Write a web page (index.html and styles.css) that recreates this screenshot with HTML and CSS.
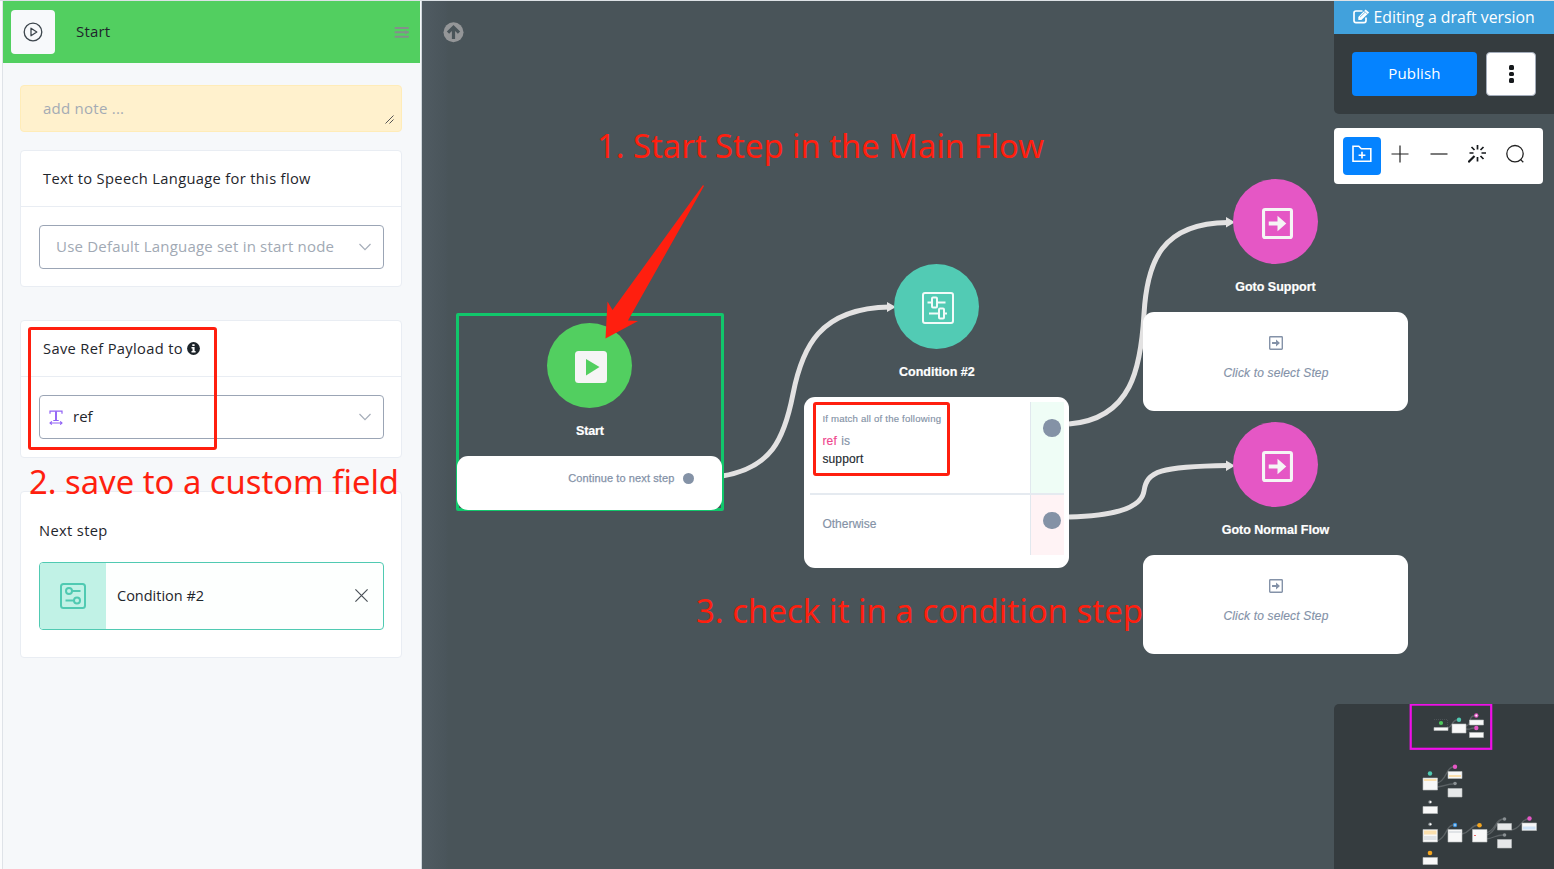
FILE: index.html
```html
<!DOCTYPE html>
<html lang="en">
<head>
<meta charset="utf-8">
<title>Flow builder</title>
<link rel="stylesheet" href="styles.css">
</head>
<body>
<svg class="defs" width="0" height="0">
  <symbol id="goto" viewBox="0 0 30 30">
    <rect x="1.5" y="1.5" width="27" height="27" rx="1.5" fill="none" stroke="currentColor" stroke-width="3"/>
    <path d="M6.5 13H15V7.5L23.5 15L15 22.5V17H6.5Z" fill="currentColor"/>
  </symbol>
</svg>
<div class="app">
  <aside class="sidebar">
    <header class="head">
      <span class="head-icon">
        <svg width="20" height="20" viewBox="0 0 20 20" fill="none" stroke="#3d464d" stroke-width="1.3"><circle cx="10" cy="10" r="8.8"/><path d="M8 6.2V13.8L13.8 10Z" stroke-linejoin="round"/></svg>
      </span>
      <span class="head-title">Start</span>
      <svg class="head-menu" width="16" height="13" viewBox="0 0 16 13" stroke="#848f8c" stroke-width="2" stroke-linecap="round"><path d="M1.5 2H14M1.5 6.3H14M1.5 10.8H14"/><path d="M11 4L14.5 6.3L11 8.6Z" fill="#848f8c" stroke="none"/></svg>
    </header>
    <div class="body">
      <div class="note">add note ...
        <svg class="grip" width="9" height="9" viewBox="0 0 9 9" stroke="#555" stroke-width="1"><path d="M.5 8.5L8.5 .5M4.5 8.5L8.5 4.5"/></svg>
      </div>
      <section class="card">
        <h2 class="card-head">Text to Speech Language for this flow</h2>
        <div class="card-body">
          <div class="select placeholder"><span>Use Default Language set in start node</span>
            <svg width="12" height="8" viewBox="0 0 12 8" fill="none" stroke="#a5adb9" stroke-width="1.2"><path d="M.5 1L6 6.6L11.5 1"/></svg></div>
        </div>
      </section>
      <section class="card spaced">
        <h2 class="card-head">Save Ref Payload to
          <svg class="info" width="13" height="13" viewBox="0 0 13 13"><circle cx="6.5" cy="6.5" r="6.4" fill="#1c2329"/><path d="M5.3 2.2h2.3v1.8H5.3zM4.5 5.1h3.1v4h1v1.4H4.5V9.1h1V6.5h-1z" fill="#fff"/></svg></h2>
        <div class="card-body">
          <div class="select value">
            <svg width="14" height="15" viewBox="0 0 14 15" fill="none" stroke="#9162f5"><path d="M1 3.8V1.2H13V3.8M4.3 10.5H9.7" stroke-width="1.2"/><path d="M7 1.2V10.5" stroke-width="1.9"/><path d="M1 13H13M2.8 11.4L1 13L2.8 14.6M11.2 11.4L13 13L11.2 14.6" stroke-width="1.1"/></svg>
            <span>ref</span>
            <svg class="chev" width="12" height="8" viewBox="0 0 12 8" fill="none" stroke="#a5adb9" stroke-width="1.2"><path d="M.5 1L6 6.6L11.5 1"/></svg></div>
        </div>
      </section>
      <section class="card spaced next">
        <h2 class="next-title">Next step</h2>
        <div class="step">
          <span class="step-icon"><svg width="26" height="26" viewBox="0 0 26 26" fill="none" stroke="#50cab2" stroke-width="2"><rect x="1" y="1" width="24" height="24" rx="2.5"/><circle cx="9" cy="8" r="3"/><path d="M12 8H20.5M5.5 17.5H14"/><circle cx="17" cy="17.5" r="3"/></svg></span>
          <span class="step-name">Condition #2</span>
          <svg width="13" height="13" viewBox="0 0 13 13" stroke="#4b5158" stroke-width="1.2"><path d="M.4 .4L12.6 12.6M12.6 .4L.4 12.6"/></svg>
        </div>
      </section>
    </div>
  </aside>

  <main class="canvas">
    <svg class="edges" width="1132" height="869" viewBox="422 0 1132 869">
      <g fill="none" stroke="#e3e2e2" stroke-width="5">
        <path d="M722 476C771 468 784 440 793 394S819 308 890 307"/>
        <path d="M1069 424C1132 419 1141 367 1144 314S1162 223 1228 222.5"/>
        <path d="M1069 517C1105 516 1141 511 1144 491S1160 466.5 1228 465.5"/>
      </g>
      <path d="M887 302L896 307L887 312ZM1226 217L1235 222.3L1226 227.5ZM1226 460.5L1235 465.7L1226 471Z" fill="#e3e2e2"/>
      <circle cx="453.5" cy="32.3" r="10" fill="#949698"/>
      <path d="M453.5 39V27.5M448 32.7L453.5 27.2L459 32.7" fill="none" stroke="#495459" stroke-width="3.2"/>
    </svg>

    <div class="selection"></div>
    <article class="node n-start">
      <div class="disc green"><svg width="32" height="32" viewBox="0 0 32 32"><rect width="32" height="32" rx="3.5" fill="#f5f5f5"/><path d="M11 8L24.5 16L11 24.5Z" fill="#52cf60"/></svg></div>
      <h3 class="node-title t-start">Start</h3>
      <div class="box box-start"><span>Continue to next step</span><i class="dot"></i></div>
    </article>

    <article class="node n-cond">
      <div class="disc teal"><svg width="32" height="32" viewBox="0 0 32 32" fill="none" stroke="#f2fbf9" stroke-width="2"><rect x="1" y="1" width="30" height="30" rx="2"/><path d="M5.5 10.5H9.5M15.5 10.5H23.5M7 21.5H16.5M22 21.5H25"/><rect x="10" y="5.5" width="5" height="10" rx="1"/><rect x="17" y="16.5" width="5" height="10" rx="1"/></svg></div>
      <h3 class="node-title">Condition #2</h3>
      <div class="box box-cond">
        <div class="rule match"><div class="rule-text"><p class="rule-cap">If match all of the following</p><p><b>ref</b> <em>is</em></p><p class="rule-val">support</p></div><div class="port ok"><i></i></div></div>
        <div class="rule other"><div class="rule-text">Otherwise</div><div class="port no"><i></i></div></div>
      </div>
    </article>

    <article class="node n-support">
      <div class="disc pink"><svg width="31" height="31"><use href="#goto"/></svg></div>
      <h3 class="node-title">Goto Support</h3>
      <div class="box box-goto"><svg width="14" height="14"><use href="#goto"/></svg><span>Click to select Step</span></div>
    </article>

    <article class="node n-normal">
      <div class="disc pink"><svg width="31" height="31"><use href="#goto"/></svg></div>
      <h3 class="node-title">Goto Normal Flow</h3>
      <div class="box box-goto"><svg width="14" height="14"><use href="#goto"/></svg><span>Click to select Step</span></div>
    </article>

    <div class="publish-panel">
      <div class="draft">
        <svg width="17" height="15" viewBox="0 0 17 15"><path d="M13 8.5V11.5Q13 13.6 11 13.6H3Q1 13.6 1 11.5V4Q1 2 3 2H9.5" fill="none" stroke="#fff" stroke-width="1.7"/><path d="M5.3 11V7.9L12.6 .4L16.2 3.6L8.4 11Z" fill="#fff"/><path d="M7 8.2L12 3.3M11 1.8L14.6 5.2" stroke="#41a1dc" stroke-width=".7"/></svg>
        <span>Editing a draft version</span>
      </div>
      <div class="publish-row"><button class="publish">Publish</button><button class="more"><i></i><i></i><i></i></button></div>
    </div>

    <div class="tools">
      <span class="tool active"><svg width="20" height="18" viewBox="0 0 20 18" fill="none" stroke="#fff" stroke-width="1.6"><path d="M1 16.2V1.2H6.8L9.3 3.8H18.8V16.2Z"/><path d="M10 6.8V13.6M6.6 10.2H13.4"/></svg></span>
      <span class="tool"><svg width="18" height="18" viewBox="0 0 18 18" stroke="#222" stroke-width="1.2"><path d="M9 .5V17.5M.5 9H17.5"/></svg></span>
      <span class="tool"><svg width="18" height="18" viewBox="0 0 18 18" stroke="#222" stroke-width="1.2"><path d="M.5 9H17.5"/></svg></span>
      <span class="tool"><svg width="18" height="18" viewBox="0 0 18 18" stroke="#16191c" stroke-width="1.7"><path d="M9.5 0V4.500M9.500 12V16.500M13.500 8H18M1.500 8H5.500M3.500 2L6.500 5M15.500 2L12.500 5M15.500 14L12.500 11"/><path d="M.3 17.200L6.500 11" stroke-width="2.200"/></svg></span>
      <span class="tool"><svg width="20" height="20" viewBox="0 0 20 20" fill="none" stroke="#222" stroke-width="1.3"><circle cx="10" cy="9.7" r="8.2"/><path d="M15.4 15.4L18.3 18.3"/></svg></span>
    </div>

    <svg class="minimap" width="220" height="165" viewBox="0 0 220 165">
      <g fill="none" stroke="#5b6164" stroke-width="1.3">
        <path d="M114 24C119 22 118 16 123 16M132 22C138 21 134 12 140 12M132 25C138 26 135 24 140 24M103 79C113 77 112 63 119 63M103 83C112 82 113 80 119 80M103 137C113 134 112 121 119 121M128 130C137 128 137 121 144 121M152 129C162 127 161 115 169 115M153 131C163 128 162 115 169 115M152 135C161 134 161 131 169 131M177 126C187 125 187 115 194 115"/>
        <path d="M100 15.5H113.5V24" stroke-dasharray="1 1" stroke-width=".6"/>
      </g>
      <rect x="76.7" y=".6" width="80.5" height="44.2" fill="none" stroke="#f00fe9" stroke-width="2.2"/>
      <g fill="#f8f8f8" stroke="#b9bcbd" stroke-width=".6">
        <path d="M100 23.5h14v3h-14zM118 20h14v9h-14zM135.5 16h14v5h-14zM135.5 28.5h14v5h-14z"/>
        <path d="M89 74h14.5v12H89zM114 67.5h14v7h-14zM89 102.5h14.5v7H89zM89 125.5h14.5v12.5H89zM114 125.5h14v12.5h-14zM138.5 125.5h14.5v12.5h-14.5zM188 119h14.5v7.5H188zM89 153.5h14.5v7H89z"/>
        <path d="M114 84.5h14v8.5h-14zM163.5 119.5h14v6.5h-14zM163.5 135.5h14v8.5h-14z" fill="#e6e8e9"/>
      </g>
      <path d="M90 75h12.5v2H90zM90 126.500h12.500v4H90zM115 71h12v2h-12z" fill="#fbe0ae"/>
      <path d="M90 132h12.500v4H90zM115 127h12v2h-12z" fill="#e0e3e6"/><path d="M189 122.500h12.500v3H189z" fill="#cfe3f7"/>
      <path d="M140 131h2v1h-2z" fill="#e66"/>
      <circle cx="107" cy="19" r="2.1" fill="#4dcb5c"/>
      <g fill="#50cab2"><circle cx="125" cy="15.7" r="2.2"/><circle cx="96" cy="69.5" r="2.2"/></g>
      <g fill="#e557c5"><circle cx="142.3" cy="11.5" r="2.2"/><circle cx="142.3" cy="24" r="2.2"/><circle cx="121" cy="62.8" r="2.2"/><circle cx="195.5" cy="114.5" r="2.2"/></g>
      <g fill="#f4a51f"><circle cx="145.5" cy="121.2" r="2.3"/><circle cx="96" cy="149" r="2.3"/></g>
      <circle cx="121" cy="121" r="2.2" fill="#3f93dc"/>
      <g fill="#8a9093"><circle cx="121" cy="79.5" r="1.8"/><circle cx="96" cy="98" r="1.7"/><circle cx="96" cy="120.3" r="1.7"/><circle cx="170.5" cy="115" r="1.8"/><circle cx="170.5" cy="131" r="1.8"/></g>
      <g fill="#fff"><circle cx="142.3" cy="11.5" r="1"/><circle cx="96.5" cy="98" r="1"/><circle cx="96.5" cy="120.3" r="1"/><circle cx="121" cy="121" r=".8"/></g>
    </svg>
  </main>
</div>

<svg class="notes" width="1554" height="869" viewBox="0 0 1554 869">
  <g fill="none" stroke="#ff1f0f" stroke-width="3">
    <rect x="29.5" y="328.5" width="186" height="120" rx="1.5"/>
    <rect x="814.5" y="403.5" width="134" height="71" rx="1.5"/>
  </g>
  <path d="M703 185L704 186L628 320.5L638 321L605.5 338.5L607.5 301.5L612.5 310Z" fill="#ff1f0f"/>
  <g class="callouts">
    <text x="597" y="158" textLength="447" lengthAdjust="spacingAndGlyphs">1. Start Step in the Main Flow</text>
    <text x="29" y="494" textLength="370" lengthAdjust="spacingAndGlyphs">2. save to a custom field</text>
    <text x="696" y="623" textLength="447" lengthAdjust="spacingAndGlyphs">3. check it in a condition step</text>
  </g>
</svg>
</body>
</html>
```
FILE: styles.css
```css
* { box-sizing: border-box; }
body { margin: 0; width: 1554px; height: 869px; overflow: hidden; position: relative; font: 15px "Open Sans", "Noto Sans", sans-serif; color: #1f262c; }
h2, h3, p { margin: 0; font-weight: 400; font-size: inherit; }
svg { display: block; flex: none; }
.defs { position: absolute; }
.app { display: flex; height: 869px; border-top: 1px solid #dde2e6; }

.sidebar { width: 422px; flex: none; background: #f6f8fa; border-left: 2px solid #fbfcfd; border-right: 1px solid #cfd6dc; padding: 0 1px; box-shadow: inset 1px 0 #dfe3e8; }
.head { height: 62px; background: #52cf60; display: flex; align-items: center; padding: 0 10px 0 8px; }
.head-icon { width: 44px; height: 44px; border-radius: 4px; background: #f7f9fb; display: flex; align-items: center; justify-content: center; }
.head-title { margin-left: 21px; flex: 1; padding-bottom: 2px; letter-spacing: .2px; }
.head-menu { margin-top: 1px; }
.body { padding: 22px 18px 0 17px; }
.note { position: relative; height: 47px; line-height: 45px; border: 1px solid #ffecb8; border-radius: 4px; background: #fff1cd; color: #a4abb4; padding-left: 22px; letter-spacing: .25px; }
.grip { position: absolute; right: 7px; bottom: 7px; }
.card { margin-top: 18px; height: 137px; background: #fff; border: 1px solid #e9edf3; border-radius: 4px; }
.card.spaced { margin-top: 33px; height: 138px; }
.card-head { height: 56px; line-height: 55px; padding-left: 22px; border-bottom: 1px solid #e9edf3; display: flex; align-items: center; gap: 5px; font-size: 14.7px; letter-spacing: .33px; }
.info { margin-left: -1px; }
.card-body { padding: 18px 17px 0 18px; }
.select { height: 44px; border: 1px solid #9ba5b5; border-radius: 4px; display: flex; align-items: center; padding: 0 12px 0 17px; justify-content: space-between; }
.placeholder { color: #a1a9b4; font-size: 15px; letter-spacing: .2px; padding-left: 16px; }
.placeholder span { padding-bottom: 2px; }
.value { padding-left: 9px; justify-content: flex-start; gap: 10px; }
.value span { padding-bottom: 2px; }
.chev { margin-left: auto; }
.card.next { height: 167px; padding: 27px 17px 0 18px; }
.next-title { line-height: 22px; font-size: 14.7px; letter-spacing: .35px; }
.step { margin-top: 21px; height: 68px; border: 1px solid #50cab2; border-radius: 4px; background: #fdfffe; display: flex; align-items: center; padding-right: 15px; overflow: hidden; }
.step svg { margin-bottom: 1px; }
.step-icon { width: 66px; height: 66px; background: #c1f2e6; display: flex; align-items: center; justify-content: center; }
.step-name { flex: 1; padding: 0 0 2px 11px; font-size: 14.5px; }

/* The flow canvas starts below the 1px top rule; layers are pulled up to share its origin. */
.canvas { position: relative; flex: 1; margin-top: -1px; border-top: 1px solid #dde2e6; height: 869px; background: linear-gradient(90deg, #505b62 0, #4a555b 24px, #495459 26px); overflow: hidden; font-family: "Liberation Sans", Arial, sans-serif; }
.edges { position: absolute; left: 0; top: -1px; }
.selection { position: absolute; left: 34px; top: 312px; width: 268px; height: 198px; border: 3px solid #11c76b; border-radius: 2px; }
.node { position: absolute; width: 265px; display: flex; flex-direction: column; align-items: center; }
.n-start { left: 35.4px; top: 322px; }
.n-cond { left: 382.4px; top: 263px; }
.n-support { left: 721px; top: 178px; }
.n-normal { left: 721px; top: 421.4px; }
.disc { width: 85px; height: 85px; border-radius: 50%; display: flex; align-items: center; justify-content: center; padding: 3px 0 0 3px; color: #f5f5f5; }
.green { background: #52cf60; }
.teal { background: #52cbb4; }
.pink { background: #e557c5; }
.node-title { height: 48px; line-height: 47px; color: #fff; font-weight: 700; font-size: 12.5px; -webkit-text-stroke: .2px #fff; }
.t-start { letter-spacing: -.15px; }
.box { width: 265px; background: #fff; border-radius: 11px; }
.box-start { height: 53.5px; display: flex; justify-content: flex-end; padding: 15px 28px 0 0; gap: 9px; font-size: 11px; line-height: 14px; color: #8492a8; letter-spacing: .1px; -webkit-text-stroke: .25px #8492a8; }
.dot { width: 11px; height: 11px; margin-top: 2px; border-radius: 50%; background: #8492a6; }
.box-cond { height: 171px; padding: 5px 5px 0 6px; font-size: 12px; color: #8492a6; }
.rule { display: flex; justify-content: space-between; }
.match { height: 92.5px; border-bottom: 2px solid #e5eaf0; }
.other { height: 60px; }
.rule-text { padding: 10px 0 0 12px; line-height: 18px; -webkit-text-stroke: .15px; }
.rule-cap { font-size: 9.6px; line-height: 13px; margin-bottom: 7px; letter-spacing: .2px; }
.rule b { color: #f0478f; font-weight: 400; letter-spacing: .2px; }
.rule em { font-style: normal; margin-left: 1px; }
.rule-val { color: #22292f; letter-spacing: .15px; }
.other .rule-text { padding-top: 20px; }
.port { width: 34.5px; border-left: 1.5px solid #e1e8ee; padding: 17px 0 0 12.5px; }
.port i { display: block; width: 17.5px; height: 17.5px; border-radius: 50%; background: #8492a6; }
.ok { background: #effdf6; }
.no { background: #fff3f5; }
.box-goto { height: 99px; display: flex; flex-direction: column; align-items: center; padding: 24px 0 0 1px; color: #8492a8; font-size: 12px; font-style: italic; letter-spacing: .15px; -webkit-text-stroke: .15px; }
.box-goto span { margin-top: 16px; line-height: 15px; }

.publish-panel { position: absolute; top: 0; right: 0; width: 220px; height: 113px; background: #353c3f; border-radius: 0 0 0 5px; font-family: "Open Sans", sans-serif; }
.draft { height: 33px; background: #41a1dc; color: #fff; display: flex; align-items: center; gap: 3.5px; padding: 0 0 2px 19px; font-size: 15.8px; white-space: nowrap; }
.publish-row { display: flex; gap: 9px; padding: 18px 0 0 18px; }
.publish { width: 125px; height: 44px; border: 0; border-radius: 4px; background: #0583ff; color: #fff; font: 15px "Open Sans", sans-serif; letter-spacing: .15px; padding: 0 0 3px; }
.more { width: 50px; height: 44px; border: 1px solid #a3acba; border-radius: 4px; background: #fff; padding: 0; display: flex; flex-direction: column; align-items: center; justify-content: center; gap: 2px; }
.more i { width: 5px; height: 4.5px; border-radius: 1.5px; background: #16191c; }
.tools { position: absolute; top: 127px; left: 912px; width: 209px; height: 56px; border-radius: 4px; background: #fff; display: flex; padding: 9px; }
.tool { width: 38.3px; height: 38px; display: flex; align-items: center; justify-content: center; padding-bottom: 4px; border-radius: 4px; }
.active { background: #0583ff; }
.minimap { position: absolute; left: 912px; top: 703px; background: #353c3f; border-top-left-radius: 5px; }

.notes { position: absolute; left: 0; top: 0; }
.callouts { font: 33.5px "Noto Sans", "Open Sans", sans-serif; fill: #ff1f0f; }
```
